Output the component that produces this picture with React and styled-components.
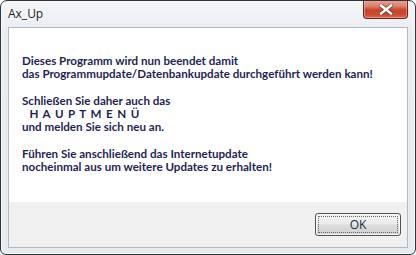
import React from "react";
import styled, { createGlobalStyle } from "styled-components";

const Global = createGlobalStyle`
  html, body { margin: 0; padding: 0; background: #ffffff; }
  body { width: 416px; height: 255px; overflow: hidden; }
`;

const Window = styled.div`
  box-sizing: border-box;
  width: 416px;
  height: 255px;
  border: 1px solid #2f3338;
  border-radius: 7px 7px 6px 6px;
  background: linear-gradient(180deg, #f4f6f9 0%, #e9edf2 12%, #e6ebf0 100%);
  box-shadow: inset 0 0 0 1px #f8fafc;
  display: flex;
  flex-direction: column;
  overflow: hidden;
`;

const TitleBar = styled.div`
  height: 26px;
  display: flex;
  align-items: flex-start;
  justify-content: space-between;
  padding: 0 7px 0 7px;
`;

const Title = styled.span`
  font-family: "Open Sans", "Noto Sans", sans-serif;
  font-size: 12px;
  color: #1b1b1b;
  margin-top: 4px;
  text-shadow: 0 0 6px #ffffff, 0 0 3px #ffffff;
`;

const CloseButton = styled.div`
  box-sizing: border-box;
  width: 45px;
  height: 19px;
  margin-top: -1px;
  border: 1px solid #6e2418;
  border-top: none;
  border-radius: 0 0 4px 4px;
  background: linear-gradient(180deg, #e9a899 0%, #dc7f6b 35%, #c8442c 55%, #cc4a30 80%, #d9694e 100%);
  box-shadow: inset 0 0 0 1px rgba(255, 200, 190, 0.45);
  display: flex;
  align-items: center;
  justify-content: center;
`;

const Client = styled.div`
  flex: 1;
  margin: 0 7px 6px 7px;
  border: 1px solid #b3b9c1;
  display: flex;
  flex-direction: column;
  background: #f0f0f0;
`;

const MessagePanel = styled.div`
  height: 174px;
  background: #ffffff;
  padding: 26px 0 0 13px;
  box-sizing: border-box;
`;

const Line = styled.div`
  font-family: "Lato", "Open Sans", sans-serif;
  font-weight: 700;
  font-size: 11.6px;
  line-height: 13.3px;
  height: 13.3px;
  color: #1f1f55;
  white-space: pre;
  letter-spacing: ${(p) => (p.$spaced ? "0.9px" : "0")};
`;

const Footer = styled.div`
  flex: 1;
  display: flex;
  align-items: flex-start;
  justify-content: flex-end;
  padding: 11px 6px 0 0;
`;

const OkButton = styled.button`
  box-sizing: border-box;
  width: 86px;
  height: 23px;
  border: 1px solid #4f5257;
  border-radius: 3px;
  background: linear-gradient(180deg, #f3f3f3 0%, #ececec 48%, #dcdcdc 52%, #d2d2d2 100%);
  box-shadow: inset 0 0 0 1px #fbfbfb;
  padding: 2px;
  display: flex;
  cursor: default;
`;

const FocusRect = styled.span`
  flex: 1;
  border: 1px dotted #6a6a6a;
  display: flex;
  align-items: center;
  justify-content: center;
  font-family: "Open Sans", "Noto Sans", sans-serif;
  font-size: 12px;
  color: #1c2a48;
  line-height: 1;
`;

const lines = [
  "Dieses Programm wird nun beendet damit",
  "das Programmupdate/Datenbankupdate durchgeführt werden kann!",
  "",
  "Schließen Sie daher auch das",
  { text: "  H A U P T M E N Ü", spaced: true },
  "und melden Sie sich neu an.",
  "",
  "Führen Sie anschließend das Internetupdate",
  "nocheinmal aus um weitere Updates zu erhalten!",
];

export default function App() {
  return (
    <>
      <Global />
      <Window>
        <TitleBar>
          <Title>Ax_Up</Title>
          <CloseButton>
            <svg width="14" height="11" viewBox="0 0 14 11">
              <path
                d="M2 1.5 L12 9.5 M12 1.5 L2 9.5"
                stroke="#3a2a2a"
                strokeWidth="4.2"
                strokeLinecap="square"
                opacity="0.55"
              />
              <path
                d="M2 1.5 L12 9.5 M12 1.5 L2 9.5"
                stroke="#ffffff"
                strokeWidth="2.4"
                strokeLinecap="square"
              />
            </svg>
          </CloseButton>
        </TitleBar>
        <Client>
          <MessagePanel>
            {lines.map((l, i) =>
              typeof l === "string" ? (
                <Line key={i}>{l}</Line>
              ) : (
                <Line key={i} $spaced={l.spaced}>
                  {l.text}
                </Line>
              )
            )}
          </MessagePanel>
          <Footer>
            <OkButton>
              <FocusRect>OK</FocusRect>
            </OkButton>
          </Footer>
        </Client>
      </Window>
    </>
  );
}
